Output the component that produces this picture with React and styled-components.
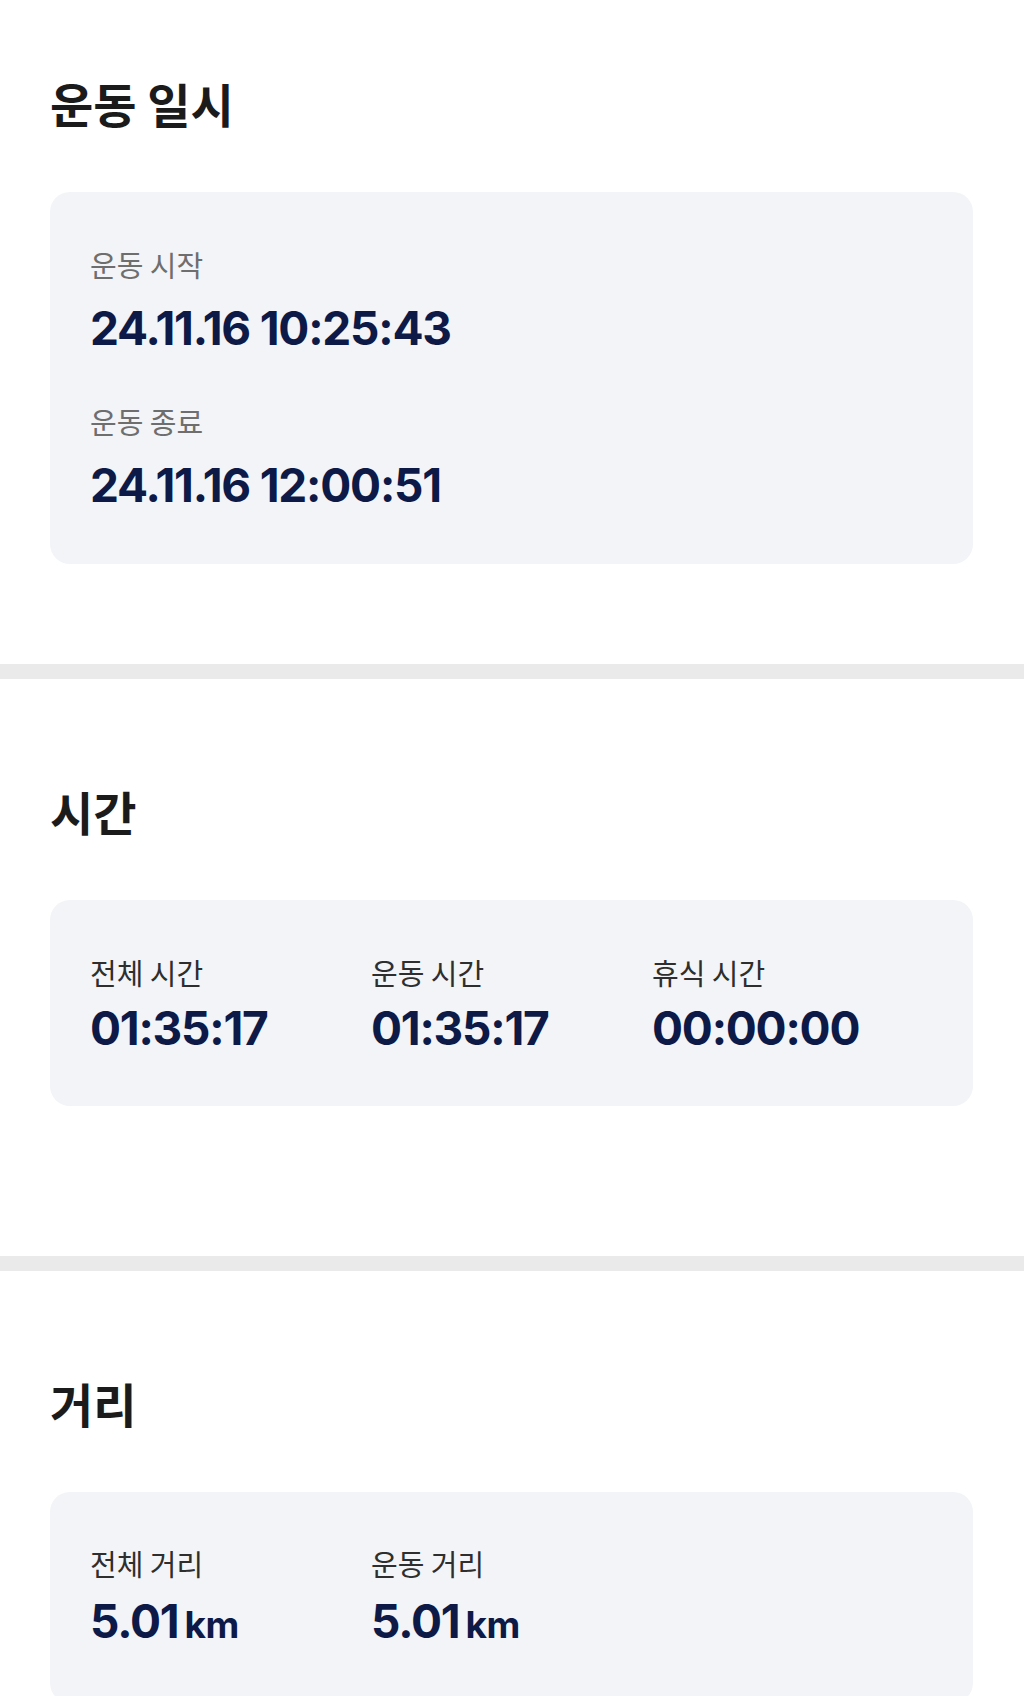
import styled, { createGlobalStyle } from "styled-components";

const GlobalStyle = createGlobalStyle`
    html, body {
        margin: 0;
        padding: 0;
        background: #ffffff;
    }
    body {
        font-family: "Noto Sans CJK KR", "Noto Sans", sans-serif;
        -webkit-font-smoothing: antialiased;
    }
`;

const StyledPage = styled.div`
    width: 1024px;
    min-height: 1696px;
    background: #ffffff;
`;

const StyledSection = styled.section`
    padding: ${({ $top }) => $top}px 51px ${({ $bottom }) => $bottom}px 50px;
`;

const StyledTitle = styled.h2`
    margin: 0 0 ${({ $gap }) => $gap}px 0;
    font-family: "Noto Sans CJK KR", sans-serif;
    font-size: 47px;
    line-height: 56px;
    font-weight: 700;
    color: #1b1b1b;
`;

const StyledCard = styled.div`
    background: #f3f4f8;
    border-radius: 20px;
    padding: ${({ $top }) => $top}px 40px ${({ $bottom }) => $bottom}px 40px;
`;

const StyledStack = styled.div`
    display: flex;
    flex-direction: column;
    gap: 47px;
`;

const StyledGrid = styled.div`
    display: grid;
    grid-template-columns: repeat(3, 1fr);
`;

const StyledItem = styled.div`
    display: flex;
    flex-direction: column;
    gap: ${({ $gap }) => $gap}px;
`;

const StyledLabel = styled.div`
    font-family: "Noto Sans CJK KR", sans-serif;
    font-size: 29px;
    line-height: 36px;
    font-weight: 400;
    color: ${({ $muted }) => ($muted ? "#6e6e6e" : "#2e2e2e")};
`;

const StyledValue = styled.div`
    font-family: "Inter", "Noto Sans CJK KR", sans-serif;
    font-size: 46px;
    line-height: 56px;
    font-weight: 700;
    color: #0d1a47;
    letter-spacing: -1.2px;
`;

const StyledUnit = styled.span`
    font-size: 37px;
    margin-left: 6px;
    letter-spacing: -0.5px;
`;

const StyledDivider = styled.div`
    height: 15px;
    background: #eaeaea;
`;

const Stat = ({ label, value, unit, muted, gap }) => {
    return <StyledItem $gap={gap}>
                <StyledLabel $muted={muted}>{label}</StyledLabel>
                <StyledValue>
                    {value}
                    {unit && <StyledUnit>{unit}</StyledUnit>}
                </StyledValue>
            </StyledItem>
}

const App = () => {
    return <StyledPage>
                <GlobalStyle />
                <StyledSection $top={75} $bottom={100}>
                    <StyledTitle $gap={61}>운동 일시</StyledTitle>
                    <StyledCard $top={54} $bottom={51}>
                        <StyledStack>
                            <Stat muted gap={18} label="운동 시작" value="24.11.16 10:25:43" />
                            <Stat muted gap={18} label="운동 종료" value="24.11.16 12:00:51" />
                        </StyledStack>
                    </StyledCard>
                </StyledSection>
                <StyledDivider />
                <StyledSection $top={104} $bottom={150}>
                    <StyledTitle $gap={61}>시간</StyledTitle>
                    <StyledCard $top={54} $bottom={50}>
                        <StyledGrid>
                            <Stat gap={10} label="전체 시간" value="01:35:17" />
                            <Stat gap={10} label="운동 시간" value="01:35:17" />
                            <Stat gap={10} label="휴식 시간" value="00:00:00" />
                        </StyledGrid>
                    </StyledCard>
                </StyledSection>
                <StyledDivider />
                <StyledSection $top={104} $bottom={0}>
                    <StyledTitle $gap={61}>거리</StyledTitle>
                    <StyledCard $top={53} $bottom={50}>
                        <StyledGrid>
                            <Stat gap={12} label="전체 거리" value="5.01" unit="km" />
                            <Stat gap={12} label="운동 거리" value="5.01" unit="km" />
                        </StyledGrid>
                    </StyledCard>
                </StyledSection>
            </StyledPage>
}

export default App
